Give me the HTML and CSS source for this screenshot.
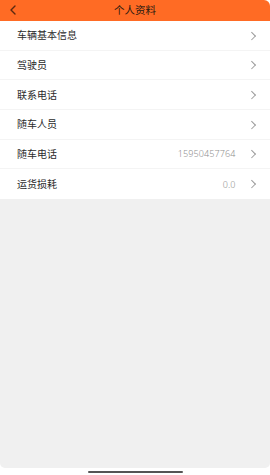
FILE: index.html
```html
<!DOCTYPE html>
<html lang="zh">
<head>
<meta charset="utf-8">
<link rel="stylesheet" href="styles.css">
</head>
<body>
<div class="screen">
  <header class="nav">
    <span class="back"><svg width="8" height="10" viewBox="0 0 8 10"><path d="M6 1 L2 5 L6 9" fill="none" stroke="#5a2a10" stroke-width="1.4" stroke-linecap="round" stroke-linejoin="round"/></svg></span>
    <h1 class="title">个人资料</h1>
  </header>
  <ul class="list">
    <li class="row"><span class="label">车辆基本信息</span><span class="right"><span class="chev"></span></span></li>
    <li class="row"><span class="label">驾驶员</span><span class="right"><span class="chev"></span></span></li>
    <li class="row"><span class="label">联系电话</span><span class="right"><span class="chev"></span></span></li>
    <li class="row"><span class="label">随车人员</span><span class="right"><span class="chev"></span></span></li>
    <li class="row"><span class="label">随车电话</span><span class="right"><span class="value">15950457764</span><span class="chev"></span></span></li>
    <li class="row"><span class="label">运货损耗</span><span class="right"><span class="value">0.0</span><span class="chev"></span></span></li>
  </ul>
  <div class="fill"></div>
  <div class="home"><span class="indicator"></span></div>
</div>
</body>
</html>
```
FILE: styles.css
```css
* { box-sizing: border-box; }
html, body { margin: 0; padding: 0; background: #fff; }
body { font-family: "Noto Sans CJK SC", "Noto Sans", sans-serif; }
.screen {
  width: 270px;
  height: 475px;
  display: flex;
  flex-direction: column;
  background: #fff;
}
.nav {
  height: 21px;
  background: #ff6b24;
  border-radius: 0 6px 0 0;
  display: flex;
  align-items: center;
  justify-content: center;
  position: relative;
}
.back {
  position: absolute;
  left: 9px;
  top: 5px;
  display: flex;
}
.title {
  margin: 0;
  font-size: 10.5px;
  font-weight: 400;
  color: #2a1a10;
  line-height: 1;
}
.list {
  list-style: none;
  margin: 0;
  padding: 0;
  background: #fff;
}
.row {
  height: 29.67px;
  display: flex;
  align-items: center;
  justify-content: space-between;
  padding: 0 14px 0 17px;
  border-bottom: 1px solid #f4f4f4;
}
.row:last-child { border-bottom: none; }
.label {
  font-size: 10px;
  color: #2b2b2b;
  line-height: 1;
}
.right {
  display: flex;
  align-items: center;
  gap: 13px;
}
.value {
  font-family: "Noto Sans", sans-serif;
  font-weight: 300;
  font-size: 9px;
  color: #8f8f8f;
  letter-spacing: 0.1px;
}
.chev {
  width: 5.5px;
  height: 5.5px;
  border-top: 1.2px solid #9a9a9a;
  border-right: 1.2px solid #9a9a9a;
  transform: rotate(45deg);
  margin-right: 2px;
}
.fill {
  flex: 1;
  background: #f0f0f0;
  border-radius: 0 0 5px 5px;
}
.home {
  height: 7px;
  display: flex;
  justify-content: center;
  align-items: flex-end;
  padding-bottom: 2px;
}
.indicator {
  width: 95px;
  height: 2px;
  border-radius: 1px;
  background: #555;
}
```
